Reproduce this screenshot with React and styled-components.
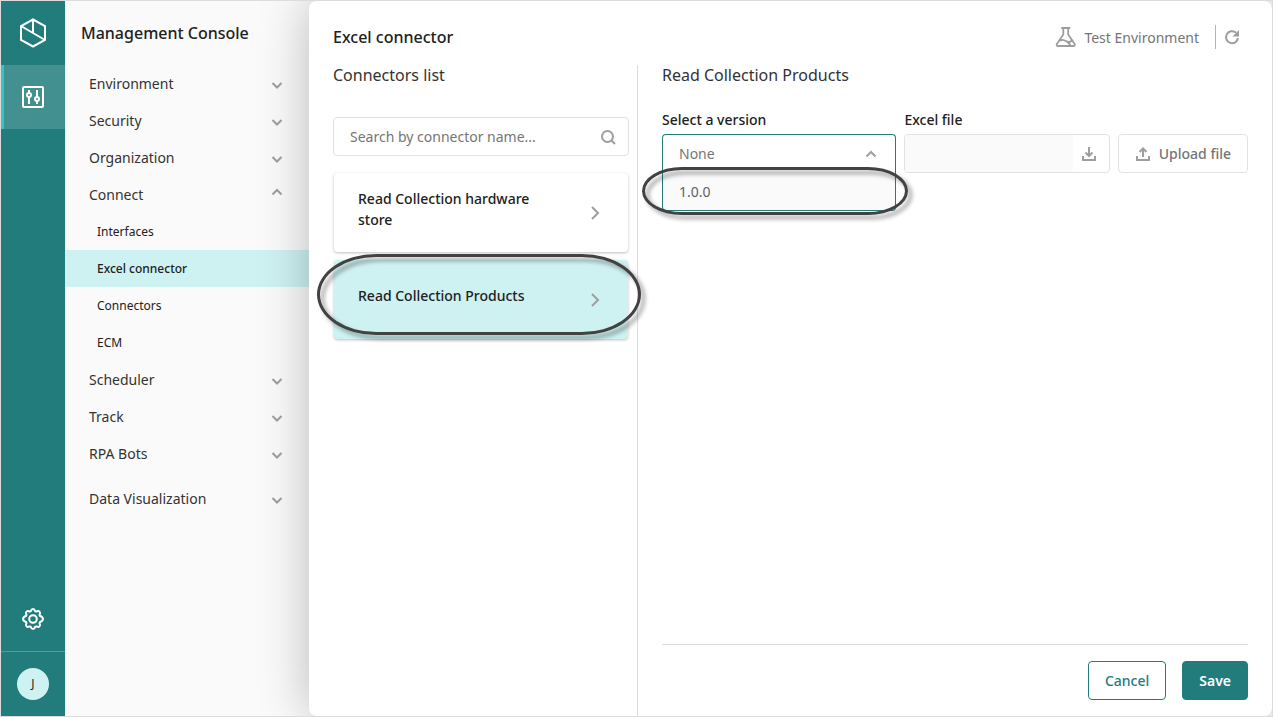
import React, { useState } from 'react'
import styled, { createGlobalStyle, css, ThemeProvider } from 'styled-components'

const theme = {
  font: '"Noto Sans", "Open Sans", sans-serif',
  colors: {
    teal: '#227c7c',
    tealLight: '#439090',
    accent: '#31c5c5',
    mint: '#cef2f2',
    text: '#212121',
    muted: '#757575',
    icon: '#9e9e9e',
    line: '#dcdcdc',
    field: '#e2e2e2',
    panel: '#fafafa',
    mark: '#424242',
  },
}

const GlobalStyle = createGlobalStyle`
  *, *::before, *::after {
    box-sizing: border-box;
  }

  body {
    margin: 0;
    background: #fafafa;
  }

  button, input, select {
    font: inherit;
    color: inherit;
  }
`

const Frame = styled.div`
  background: ${props => props.theme.colors.panel};
  border: 1px solid ${props => props.theme.colors.line};
  color: ${props => props.theme.colors.text};
  display: flex;
  font-family: ${props => props.theme.font};
  font-size: 14px;
  line-height: 21px;
  min-height: 100vh;
  overflow: hidden;
`

/* Icon rail */

const Rail = styled.aside`
  background: ${props => props.theme.colors.teal};
  color: #fff;
  display: flex;
  flex: 0 0 64px;
  flex-direction: column;
`

const RailButton = styled.button`
  align-items: center;
  background: none;
  border: none;
  cursor: pointer;
  display: flex;
  height: 64px;
  justify-content: center;
  padding: 0;
  width: 100%;

  ${props => props.$active && css`
    background: ${props.theme.colors.tealLight};
    box-shadow: inset 3px 0 ${props.theme.colors.accent};
  `}
`

const RailFooter = styled.div`
  margin-top: auto;
`

const AvatarCell = styled.div`
  border-top: 1px solid #4f9d9d;
`

const Avatar = styled.span`
  background: ${props => props.theme.colors.mint};
  border-radius: 50%;
  color: ${props => props.theme.colors.text};
  font-size: 12px;
  height: 32px;
  line-height: 32px;
  width: 32px;
`

/* Side navigation */

const SideNav = styled.nav`
  flex: 0 0 244px;
`

const NavTitle = styled.h1`
  font-size: 16px;
  font-weight: 500;
  line-height: 64px;
  margin: 0;
  padding-left: 16px;
`

const NavList = styled.ul`
  list-style: none;
  margin: 0;
  padding: 0;
`

const NavItem = styled.li`
  margin-top: ${props => (props.$spaced ? '8px' : '0')};
`

const NavGroup = styled.button`
  align-items: center;
  background: none;
  border: none;
  color: #333;
  cursor: pointer;
  display: flex;
  height: 37px;
  justify-content: space-between;
  padding: 0 26px 0 24px;
  width: 100%;

  svg {
    margin: ${props => (props['aria-expanded'] ? '0 0 5px' : '3px 0 0')};
  }
`

const NavLink = styled.a`
  background: ${props => (props.$active ? props.theme.colors.mint : 'none')};
  color: inherit;
  display: block;
  font-size: 12px;
  font-weight: ${props => (props.$active ? 500 : 400)};
  line-height: 37px;
  padding-left: 32px;
  text-decoration: none;
`

/* Main panel */

const Main = styled.main`
  background: #fff;
  border-radius: 8px;
  box-shadow: 0 0 50px rgba(0, 0, 0, 0.26);
  display: flex;
  flex: 1;
  flex-direction: column;
  min-width: 0;
  position: relative;
`

const Header = styled.header`
  align-items: center;
  display: flex;
  height: 64px;
  justify-content: space-between;
  padding: 8px 32px 0 24px;
`

const PageTitle = styled.h2`
  font-size: 16px;
  font-weight: 500;
  margin: 0;
`

const EnvironmentInfo = styled.div`
  align-items: center;
  color: ${props => props.theme.colors.muted};
  display: flex;
  gap: 8px;
`

const RefreshButton = styled.button`
  align-items: center;
  background: none;
  border: none;
  border-left: 1px solid #b4b4b4;
  cursor: pointer;
  display: flex;
  height: 24px;
  margin-left: 8px;
  padding: 0 0 0 8px;
`

const Content = styled.div`
  display: flex;
  flex: 1;
`

const ListColumn = styled.section`
  border-right: 1px solid ${props => props.theme.colors.line};
  flex: 0 0 329px;
  padding: 0 8px 0 24px;
`

const DetailColumn = styled.section`
  display: flex;
  flex: 1;
  flex-direction: column;
  min-width: 0;
  padding: 0 24px 16px;
`

const SectionTitle = styled.h3`
  color: #333;
  font-size: 16px;
  font-weight: 400;
  line-height: 20px;
  margin: 0;
`

const SearchBox = styled.div`
  align-items: center;
  border: 1px solid ${props => props.theme.colors.field};
  border-radius: 4px;
  display: flex;
  height: 39px;
  margin: 32px 0 16px;
  padding: 0 12px 0 16px;
`

const SearchInput = styled.input`
  background: none;
  border: none;
  flex: 1;
  min-width: 0;
  outline: none;
  padding: 0;

  &::placeholder {
    color: ${props => props.theme.colors.muted};
    opacity: 1;
  }
`

const CardList = styled.div`
  display: flex;
  flex-direction: column;
  gap: 8px;
  padding: 1px;
`

const CardSlot = styled.div`
  position: relative;
`

const Card = styled.button`
  align-items: center;
  background: ${props => (props.$active ? props.theme.colors.mint : '#fff')};
  border: none;
  border-radius: 4px;
  box-shadow: 0 1px 3px rgba(0, 0, 0, 0.26);
  cursor: pointer;
  display: flex;
  gap: 32px;
  height: 79px;
  padding: 0 28px 0 24px;
  text-align: left;
  width: 100%;
`

const CardName = styled.span`
  flex: 1;
  font-weight: 500;
  padding-bottom: 8px;
`

/* Hand drawn style ring laid over a highlighted control */
const Ring = styled.span`
  border: 3px solid ${props => props.theme.colors.mark};
  border-radius: ${props => props.$radius};
  filter: drop-shadow(4px 4px 2px rgba(0, 0, 0, 0.4));
  inset: ${props => props.$inset};
  pointer-events: none;
  position: absolute;
  z-index: 2;
`

const FieldRow = styled.div`
  align-items: flex-end;
  display: flex;
  gap: 8px;
  margin-top: 25px;
`

const Field = styled.div`
  flex: ${props => props.$flex};
  min-width: 0;
`

const Label = styled.label`
  display: block;
  font-weight: 500;
  line-height: 20px;
  margin-bottom: 4px;
`

const SelectBox = styled.div`
  align-items: center;
  border: 1px solid ${props => props.theme.colors.teal};
  border-radius: ${props => (props.$open ? '4px 4px 0 0' : '4px')};
  border-bottom-color: ${props => (props.$open ? 'transparent' : props.theme.colors.teal)};
  color: ${props => props.theme.colors.muted};
  display: flex;
  height: 39px;
  position: relative;

  svg {
    pointer-events: none;
    position: absolute;
    right: 18px;
  }
`

const Select = styled.select`
  appearance: none;
  background: none;
  border: none;
  height: 100%;
  outline: none;
  padding: 0 40px 0 16px;
  width: 100%;
`

const Menu = styled.div`
  background: ${props => props.theme.colors.panel};
  border: 1px solid ${props => props.theme.colors.teal};
  border-radius: 0 0 4px 4px;
  border-top: none;
  left: -1px;
  position: absolute;
  right: -1px;
  top: 100%;
`

const MenuOption = styled.button`
  background: none;
  border: none;
  color: #616161;
  cursor: pointer;
  display: block;
  height: 38px;
  padding: 0 16px;
  text-align: left;
  width: 100%;
`

const FileBox = styled.div`
  border: 1px solid ${props => props.theme.colors.field};
  border-radius: 4px;
  display: flex;
  height: 39px;
`

const FileInput = styled.input`
  background: ${props => props.theme.colors.panel};
  border: none;
  border-radius: 4px;
  flex: 1;
  min-width: 0;
  padding: 0 16px;
`

const IconButton = styled.button`
  align-items: center;
  background: none;
  border: none;
  cursor: pointer;
  display: flex;
  padding: 0 12px 0 8px;
`

const Button = styled.button`
  align-items: center;
  background: ${props => (props.$primary ? props.theme.colors.teal : '#fff')};
  border: 1px solid ${props => props.theme.colors.teal};
  border-radius: 4px;
  color: ${props => (props.$primary ? '#fff' : props.theme.colors.teal)};
  cursor: pointer;
  display: flex;
  font-weight: ${props => (props.$primary ? 600 : 500)};
  gap: 8px;
  height: 39px;
  padding: 0 16px;
  white-space: nowrap;
`

const UploadButton = styled(Button)`
  border-color: ${props => props.theme.colors.field};
  color: ${props => props.theme.colors.muted};
`

const Footer = styled.footer`
  border-top: 1px solid ${props => props.theme.colors.line};
  display: flex;
  gap: 16px;
  justify-content: flex-end;
  margin-top: auto;
  padding-top: 16px;
`

/* Icons */

const Svg = ({ width, height, children, strokeWidth = 2, color = 'currentColor' }) => (
  <svg
    width={width}
    height={height}
    viewBox={`0 0 ${width} ${height}`}
    fill="none"
    stroke={color}
    strokeWidth={strokeWidth}
    aria-hidden="true"
  >
    {children}
  </svg>
)

const Chevron = ({ up }) => (
  <Svg width={12} height={8} color={theme.colors.icon}>
    <path d={up ? 'M1.5 6.5 6 2l4.500 4.500' : 'M1.500 2 6 6.500 10.500 2'} />
  </Svg>
)

const ChevronRight = () => (
  <Svg width={10} height={16} color={theme.colors.icon}>
    <path d="M2 2l6 6-6 6" />
  </Svg>
)

const LogoIcon = () => (
  <Svg width={28} height={30} color="#fff">
    <path d="M14 1.500 26 8v14l-12 6.500L2 22V8ZM14 1.500V15M2 8l24 14" />
  </Svg>
)

const SlidersIcon = () => (
  <Svg width={22} height={22} color="#fff">
    <rect x="1" y="1" width="20" height="20" rx="1" />
    <path d="M7 4v3M7 11v7M15 4v7M15 15v3" />
    <circle cx="7" cy="9" r="2" />
    <circle cx="15" cy="13" r="2" />
  </Svg>
)

const GearIcon = () => (
  <svg width="24" height="24" viewBox="0 0 24 24" fill="none" stroke="#fff" strokeWidth="2" strokeLinejoin="round" aria-hidden="true">
    <circle cx="12" cy="12" r="3.800" />
    <path d="M9.900 4.100C10.300 2.600 10.700 2 12 2s1.700.6 2.100 2.100l1.200.5c1.400-.8 2.300-.9 3.200 0 .9.900.8 1.800 0 3.200l.5 1.200c1.500.4 2.900 1.100 2.900 3s-1.400 2.600-2.900 3l-.5 1.200c.8 1.400.9 2.300 0 3.200-.9.900-1.800.8-3.200 0l-1.200.5C13.700 21.400 13.300 22 12 22s-1.700-.6-2.100-2.100l-1.200-.5c-1.400.8-2.300.9-3.200 0-.9-.9-.8-1.800 0-3.200L5 15c-1.500-.4-2.900-1.100-2.900-3S3.500 9.400 5 9l.5-1.200c-.8-1.400-.9-2.300 0-3.200.9-.9 1.800-.8 3.200 0Z" />
  </svg>
)

const SearchIcon = () => (
  <Svg width={16} height={16} color={theme.colors.icon}>
    <circle cx="7.500" cy="7.500" r="5.500" />
    <path d="m11.500 11.500 3.500 3.500" />
  </Svg>
)

const FlaskIcon = () => (
  <svg width="21" height="22" viewBox="0 0 21 22" fill="none" stroke="#9e9e9e" strokeWidth="1.800" strokeLinejoin="round" strokeLinecap="round" aria-hidden="true">
    <path d="M7 2h7.500M8.300 2.300v6.200L2 17.800c-.7 1.200-.2 2.200 1 2.200h15.500c1.200 0 1.700-1 1-2.200L13.200 8.500V2.300" />
    <path d="M5.500 14.500c1.500-1.200 3.200-.7 4.700.3 2.200 1.500 4.300 1.800 6.500-.1M12 15.500l3 3" />
  </svg>
)

const RefreshIcon = () => (
  <Svg width={16} height={16} color={theme.colors.icon}>
    <path d="M14 9A6 6 0 1 1 12 3.700" />
    <path d="M15 1v6.500H8.500Z" fill={theme.colors.icon} stroke="none" />
  </Svg>
)

const DownloadIcon = () => (
  <Svg width={16} height={16} color={theme.colors.icon}>
    <path d="M2 10v4h12v-4M8 1v8.500M4.500 6.500 8 10l3.500-3.500" />
  </Svg>
)

const UploadIcon = () => (
  <Svg width={16} height={16} color={theme.colors.icon}>
    <path d="M2 10v4h12v-4M8 11V2.500M4.500 6 8 2.500 11.500 6" />
  </Svg>
)

/* Data */

const groups = [
  { name: 'Environment' },
  { name: 'Security' },
  { name: 'Organization' },
  { name: 'Connect', links: ['Interfaces', 'Excel connector', 'Connectors', 'ECM'] },
  { name: 'Scheduler' },
  { name: 'Track' },
  { name: 'RPA Bots' },
  { name: 'Data Visualization', spaced: true },
]

const connectors = ['Read Collection hardware store', 'Read Collection Products']

const Navigation = () => {
  const [open, setOpen] = useState('Connect')

  return (
    <SideNav>
      <NavTitle>Management Console</NavTitle>
      <NavList>
        {groups.map(({ name, links, spaced }) => (
          <NavItem key={name} $spaced={spaced}>
            <NavGroup
              type="button"
              aria-expanded={open === name}
              onClick={() => setOpen(open === name ? null : name)}
            >
              {name}
              <Chevron up={open === name} />
            </NavGroup>
            {links && open === name && (
              <NavList>
                {links.map(link => (
                  <li key={link}>
                    <NavLink href="#" $active={link === 'Excel connector'}>{link}</NavLink>
                  </li>
                ))}
              </NavList>
            )}
          </NavItem>
        ))}
      </NavList>
    </SideNav>
  )
}

const VersionSelect = () => {
  const [open, setOpen] = useState(true)
  const [version, setVersion] = useState('None')

  const toggle = (event) => {
    event.preventDefault()
    setOpen(!open)
  }

  const choose = (value) => {
    setVersion(value)
    setOpen(false)
  }

  return (
    <Field $flex="0 0 40%">
      <Label htmlFor="version">Select a version</Label>
      <SelectBox $open={open}>
        <Select
          id="version"
          value={version}
          onMouseDown={toggle}
          onChange={event => choose(event.target.value)}
        >
          <option>None</option>
          <option>1.0.0</option>
        </Select>
        <Chevron up={open} />
        {open && (
          <Menu>
            <MenuOption type="button" onClick={() => choose('1.0.0')}>1.0.0</MenuOption>
            <Ring $inset="-5px -13px -5px -21px" $radius="40px / 24px" />
          </Menu>
        )}
      </SelectBox>
    </Field>
  )
}

const App = () => {
  const [selected, setSelected] = useState('Read Collection Products')

  return (
    <ThemeProvider theme={theme}>
      <GlobalStyle />
      <Frame>
        <Rail>
          <RailButton type="button" aria-label="Home"><LogoIcon /></RailButton>
          <RailButton type="button" aria-label="Console" $active><SlidersIcon /></RailButton>
          <RailFooter>
            <RailButton type="button" aria-label="Settings"><GearIcon /></RailButton>
            <AvatarCell>
              <RailButton type="button"><Avatar>J</Avatar></RailButton>
            </AvatarCell>
          </RailFooter>
        </Rail>
        <Navigation />
        <Main>
          <Header>
            <PageTitle>Excel connector</PageTitle>
            <EnvironmentInfo>
              <FlaskIcon />
              Test Environment
              <RefreshButton type="button" aria-label="Refresh"><RefreshIcon /></RefreshButton>
            </EnvironmentInfo>
          </Header>
          <Content>
            <ListColumn>
              <SectionTitle>Connectors list</SectionTitle>
              <SearchBox>
                <SearchInput
                  type="text"
                  aria-label="Search by connector name"
                  placeholder="Search by connector name..."
                />
                <SearchIcon />
              </SearchBox>
              <CardList>
                {connectors.map(name => (
                  <CardSlot key={name}>
                    <Card type="button" $active={name === selected} onClick={() => setSelected(name)}>
                      <CardName>{name}</CardName>
                      <ChevronRight />
                    </Card>
                    {name === selected && <Ring $inset="-6px -13px 4px -17px" $radius="60px / 41px" />}
                  </CardSlot>
                ))}
              </CardList>
            </ListColumn>
            <DetailColumn>
              <SectionTitle>Read Collection Products</SectionTitle>
              <FieldRow>
                <VersionSelect />
                <Field $flex="1">
                  <Label htmlFor="file">Excel file</Label>
                  <FileBox>
                    <FileInput id="file" type="text" readOnly />
                    <IconButton type="button" aria-label="Download"><DownloadIcon /></IconButton>
                  </FileBox>
                </Field>
                <UploadButton type="button"><UploadIcon />Upload file</UploadButton>
              </FieldRow>
              <Footer>
                <Button type="button">Cancel</Button>
                <Button type="button" $primary>Save</Button>
              </Footer>
            </DetailColumn>
          </Content>
        </Main>
      </Frame>
    </ThemeProvider>
  )
}

export default App
